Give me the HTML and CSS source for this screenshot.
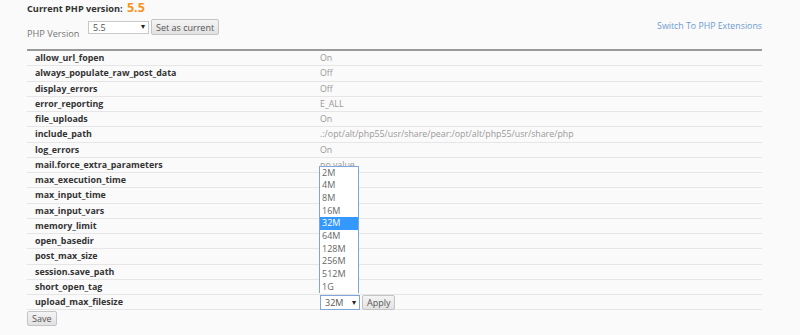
FILE: index.html
```html
<!DOCTYPE html>
<html lang="en">
<head>
  <meta charset="UTF-8">
  <meta name="viewport" content="width=device-width, initial-scale=1.0">
  <title>PHP Selector</title>
  <link rel="stylesheet" href="styles.css">
</head>
<body>
  <div class="page">
    <div class="current">Current PHP version: <span class="version">5.5</span></div>
    <div class="toolbar">
      <form class="version-form">
        <label for="php-version">PHP Version</label>
        <span class="select-wrap">
          <select id="php-version" class="select wide">
            <option>5.5</option>
          </select>
        </span>
        <button type="button" class="btn">Set as current</button>
      </form>
      <a href="#" class="switch-link">Switch To PHP Extensions</a>
    </div>

    <table class="options">
      <tr><td class="name">allow_url_fopen</td><td class="value">On</td></tr>
      <tr><td class="name">always_populate_raw_post_data</td><td class="value">Off</td></tr>
      <tr><td class="name">display_errors</td><td class="value">Off</td></tr>
      <tr><td class="name">error_reporting</td><td class="value">E_ALL</td></tr>
      <tr><td class="name">file_uploads</td><td class="value">On</td></tr>
      <tr><td class="name">include_path</td><td class="value">.:/opt/alt/php55/usr/share/pear:/opt/alt/php55/usr/share/php</td></tr>
      <tr><td class="name">log_errors</td><td class="value">On</td></tr>
      <tr><td class="name">mail.force_extra_parameters</td><td class="value">no value</td></tr>
      <tr><td class="name">max_execution_time</td><td class="value"></td></tr>
      <tr><td class="name">max_input_time</td><td class="value"></td></tr>
      <tr><td class="name">max_input_vars</td><td class="value"></td></tr>
      <tr><td class="name">memory_limit</td><td class="value"></td></tr>
      <tr><td class="name">open_basedir</td><td class="value"></td></tr>
      <tr><td class="name">post_max_size</td><td class="value"></td></tr>
      <tr><td class="name">session.save_path</td><td class="value"></td></tr>
      <tr><td class="name">short_open_tag</td><td class="value"></td></tr>
      <tr>
        <td class="name">upload_max_filesize</td>
        <td class="value editing">
          <ul class="dropdown">
            <li>2M</li>
            <li>4M</li>
            <li>8M</li>
            <li>16M</li>
            <li class="selected">32M</li>
            <li>64M</li>
            <li>128M</li>
            <li>256M</li>
            <li>512M</li>
            <li>1G</li>
          </ul>
          <div class="edit-row">
            <span class="select-wrap">
              <select class="select small focused">
                <option>32M</option>
              </select>
            </span>
            <button type="button" class="btn apply">Apply</button>
          </div>
        </td>
      </tr>
    </table>

    <button type="button" class="btn save">Save</button>
  </div>
</body>
</html>
```

FILE: styles.css
```css
body {
  margin: 0;
  background-color: #fafafa;
  font-family: 'Open Sans', sans-serif;
  color: #333;
}

.page {
  padding: 1px 38px 0 27px;
}

.current {
  font-size: 9.2px;
  font-weight: bold;
  color: #333;
  line-height: 14px;
}

.version {
  font-size: 12.5px;
  color: #f7941d;
  margin-left: 2px;
}

.toolbar {
  display: flex;
  justify-content: space-between;
  align-items: flex-start;
  margin-top: 3px;
  height: 30px;
}

.version-form {
  display: flex;
  align-items: flex-start;
}

.version-form label {
  font-size: 9.2px;
  color: #777;
  margin-top: 8px;
  width: 61px;
}

.select-wrap {
  position: relative;
  display: inline-block;
}

.select-wrap::after {
  content: "\25BE";
  position: absolute;
  right: 4px;
  top: 1px;
  font-size: 8px;
  color: #222;
  pointer-events: none;
}

.select {
  appearance: none;
  -webkit-appearance: none;
  display: block;
  font-family: 'Open Sans', sans-serif;
  font-size: 9px;
  color: #555;
  background: #fff;
  border: 1px solid #c8c8c8;
  border-radius: 0;
  padding: 0 4px;
  margin: 0;
  height: 13px;
  line-height: 11px;
  outline: none;
}

.select.wide {
  width: 61px;
  margin-top: 2px;
}

.select.small {
  width: 40px;
  height: 15px;
  line-height: 13px;
}

.select.focused {
  border-color: #7fa6d8;
}

.btn {
  font-family: 'Open Sans', sans-serif;
  font-size: 9px;
  color: #555;
  background: linear-gradient(#f4f4f4, #e2e2e2);
  border: 1px solid #c4c4c4;
  border-radius: 2px;
  padding: 0 4px;
  height: 16px;
  margin-left: 2px;
  cursor: pointer;
}

.switch-link {
  font-size: 8.8px;
  color: #6c9bd2;
  text-decoration: none;
  margin-top: 1px;
}

.options {
  width: 100%;
  border-collapse: collapse;
  border-top: 2px solid #999;
}

.options td {
  height: 14.25px;
  padding: 0;
  border-bottom: 1px solid #e6e6e6;
  font-size: 8.8px;
  line-height: 12px;
  vertical-align: middle;
  white-space: nowrap;
}

.options td.name {
  width: 285px;
  padding-left: 8px;
  font-size: 8.9px;
  font-weight: bold;
  color: #333;
}

.value {
  color: #999;
}

.editing {
  position: relative;
}

.edit-row {
  display: flex;
  align-items: center;
  height: 14px;
}

.apply {
  height: 15px;
}

.dropdown {
  position: absolute;
  left: -1px;
  bottom: 16px;
  width: 38px;
  margin: 0;
  padding: 0;
  list-style: none;
  background: #fff;
  border: 1px solid #7fa6d8;
  border-bottom: none;
}

.dropdown li {
  height: 12.67px;
  line-height: 12.67px;
  padding-left: 2px;
  font-size: 9px;
  color: #666;
}

.dropdown li.selected {
  background: #3399ff;
  color: #fff;
}

.save {
  display: block;
  margin: 1px 0 0 0;
  height: 15px;
}
```
